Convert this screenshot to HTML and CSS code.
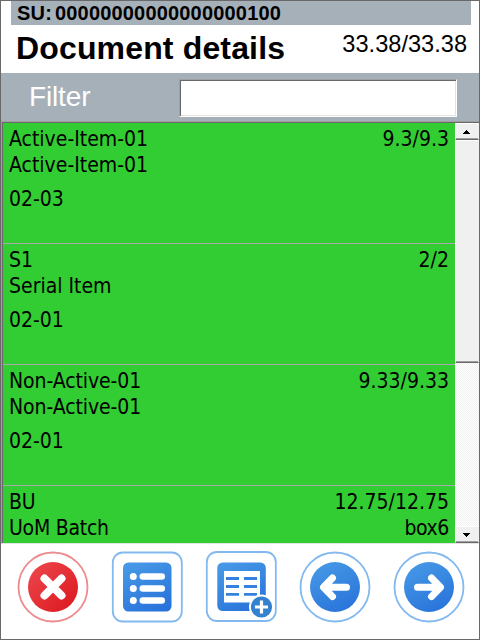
FILE: index.html
```
<!DOCTYPE html>
<html lang="en">
<head>
<meta charset="utf-8">
<title>Document details</title>
<link rel="stylesheet" href="styles.css">
</head>
<body>
<main class="screen">
  <div class="unit"><span class="unit-label">SU:</span><span class="unit-code">00000000000000000100</span></div>
  <header class="heading">
    <h1>Document details</h1>
    <span class="total">33.38/33.38</span>
  </header>
  <div class="filter">
    <label for="filter">Filter</label>
    <input id="filter" type="text">
  </div>
  <section class="list">
    <div class="rows">
      <article class="row">
        <div class="line"><span>Active-Item-01</span><span>9.3/9.3</span></div>
        <div class="line"><span>Active-Item-01</span></div>
        <div class="line place"><span>02-03</span></div>
      </article>
      <article class="row">
        <div class="line"><span>S1</span><span>2/2</span></div>
        <div class="line"><span>Serial Item</span></div>
        <div class="line place"><span>02-01</span></div>
      </article>
      <article class="row">
        <div class="line"><span class="name-non">Non-Active-01</span><span>9.33/9.33</span></div>
        <div class="line"><span class="name-non">Non-Active-01</span></div>
        <div class="line place"><span>02-01</span></div>
      </article>
      <article class="row">
        <div class="line"><span class="tight">BU</span><span>12.75/12.75</span></div>
        <div class="line"><span class="tight">UoM Batch</span><span class="unit-name">box6</span></div>
      </article>
    </div>
    <div class="scroll">
      <div class="step up"><svg width="8" height="4" viewBox="0 0 8 4" shape-rendering="crispEdges"><path d="M0 4h7v-1h-1v-1h-1v-1h-1v-1h-1v1h-1v1h-1v1h-1z"/></svg></div>
      <div class="thumb"></div>
      <div class="track"></div>
      <div class="step down"><svg width="8" height="4" viewBox="0 0 8 4" shape-rendering="crispEdges"><path d="M0 0h7v1h-1v1h-1v1h-1v1h-1v-1h-1v-1h-1v-1h-1z"/></svg></div>
    </div>
  </section>
  <nav class="actions">
    <svg width="72" height="72" viewBox="0 0 72 72">
      <defs>
        <linearGradient id="red" x1="0" y1="0" x2="1" y2="1"><stop offset="0.1" stop-color="#ec444a"/><stop offset="0.9" stop-color="#dc1b22"/></linearGradient>
        <linearGradient id="blue" x1="0.25" y1="0" x2="0.75" y2="1"><stop offset="0" stop-color="#4698e6"/><stop offset="1" stop-color="#2873da"/></linearGradient>
      </defs>
      <circle cx="36" cy="36" r="34.5" fill="none" stroke="#ee8b8f" stroke-width="1.8"/>
      <circle cx="36" cy="36" r="25" fill="url(#red)"/>
      <path d="M27.5 27.500l17 17M44.500 27.500l-17 17" stroke="#fff" stroke-width="8" stroke-linecap="round"/>
    </svg>
    <svg width="72" height="72" viewBox="0 0 72 72">
      <rect x="1.800" y="1.500" width="69" height="69" rx="10" fill="none" stroke="#83b9ef" stroke-width="1.8"/>
      <rect x="12" y="11.500" width="48.500" height="49" rx="5.500" fill="url(#blue)"/>
      <g fill="#fff"><circle cx="22.300" cy="25.500" r="3.500"/><circle cx="22.300" cy="37.500" r="3.500"/><circle cx="22.300" cy="49.500" r="3.500"/>
      <rect x="28.500" y="22.300" width="25.500" height="6.500" rx="3.200"/><rect x="28.500" y="34.300" width="25.500" height="6.500" rx="3.200"/><rect x="28.500" y="46.300" width="25.500" height="6.500" rx="3.200"/></g>
    </svg>
    <svg width="72" height="72" viewBox="0 0 72 72">
      <rect x="1.800" y="1" width="69" height="69" rx="10" fill="none" stroke="#83b9ef" stroke-width="1.8"/>
      <rect x="12.300" y="11.500" width="48.500" height="48.500" rx="5.500" fill="url(#blue)"/>
      <rect x="19" y="20" width="36" height="31.500" fill="#fff"/>
      <path d="M21 27.500h13M39 27.500h13M21 35.500h13M39 35.500h13M21 43.300h13M39 43.300h13" stroke="#3681df" stroke-width="2.800"/>
      <circle cx="56.500" cy="56" r="12.500" fill="#fff"/><circle cx="56.500" cy="56" r="10.600" fill="#3580cf"/>
      <path d="M50 56h13M56.500 49.500v13" stroke="#fff" stroke-width="3.200"/>
    </svg>
    <svg width="72" height="72" viewBox="0 0 72 72">
      <circle cx="36" cy="36" r="34.500" fill="none" stroke="#83b9ef" stroke-width="1.8"/>
      <circle cx="36" cy="36" r="25" fill="url(#blue)"/>
      <path d="M33.500 27L24.500 36.300l9 9.300M25 36.300h22.500" fill="none" stroke="#fff" stroke-width="7" stroke-linecap="round" stroke-linejoin="round"/>
    </svg>
    <svg width="72" height="72" viewBox="0 0 72 72">
      <circle cx="36" cy="36" r="34.500" fill="none" stroke="#83b9ef" stroke-width="1.8"/>
      <circle cx="36" cy="36" r="25" fill="url(#blue)"/>
      <path d="M38.500 27l9 9.300-9 9.300M47 36.300H24.500" fill="none" stroke="#fff" stroke-width="7" stroke-linecap="round" stroke-linejoin="round"/>
    </svg>
  </nav>
</main>
</body>
</html>
```
FILE: styles.css
```
* { box-sizing: border-box; }
body { margin: 0; font-family: "Liberation Sans", Arial, sans-serif; color: #000; }
.screen { display: flex; flex-direction: column; width: 480px; height: 640px; border: 1px solid #696969; background: #fff; overflow: hidden; }
.unit { display: flex; flex: none; height: 24px; margin: 0 8px 0 10px; padding-left: 6px; gap: 3px; background: #a6b0b9; font-weight: bold; font-size: 20px; line-height: 25px; white-space: nowrap; }
.unit-label, .unit-code { letter-spacing: 0.18px; }
.heading { display: flex; flex: none; justify-content: space-between; height: 48px; padding: 0 12px 0 15px; white-space: nowrap; }
h1 { margin: 0; font-size: 32px; line-height: 47px; letter-spacing: 0.15px; }
.total { font-size: 23.6px; line-height: 38px; }
.filter { display: flex; flex: none; height: 48px; padding: 6px 22px 4px 28px; justify-content: space-between; background: #a6b0b9; }
.filter label { color: #fff; font-size: 28px; line-height: 35px; letter-spacing: -0.15px; }
.filter input { width: 278px; height: 38px; padding: 2px 4px; border: 1px solid; border-color: #a0a0a0 #fff #fff #a0a0a0; box-shadow: inset 1px 1px #696969, inset -1px -1px #e3e3e3; outline: 0; background: #fff; font: 24px "Liberation Sans", sans-serif; border-radius: 0; }
.list { display: flex; flex: none; height: 423px; border-top: 1px solid #a0a0a0; border-left: 1px solid #a0a0a0; border-bottom: 1px solid #e3e3e3; }
.rows { width: 453px; flex: none; overflow: hidden; border-top: 1px solid #696969; border-left: 1px solid #696969; background: #32cd32; font-family: "DejaVu Sans Condensed", "DejaVu Sans", sans-serif; font-stretch: condensed; font-size: 21px; }
.row { height: 121px; padding: 3px 6px 0; border-bottom: 1px solid #a9a9a9; }
.line { display: flex; justify-content: space-between; height: 26px; line-height: 26px; white-space: nowrap; }
.place { margin-top: 8px; }
.name-non { letter-spacing: -0.08px; }
.tight { letter-spacing: -0.25px; }
.unit-name { letter-spacing: -0.4px; }
.scroll { display: flex; flex-direction: column; flex: 1; border-top: 1px solid #696969; background: #f0f0f0; }
.step { display: flex; justify-content: center; align-items: center; flex: none; height: 17px; border: 1px solid; border-color: #fff #f0f0f0 #696969 #fff; box-shadow: inset 0 -1px #a0a0a0; }
.thumb { flex: none; height: 223px; border: 1px solid; border-color: #fff #f0f0f0 #696969 #fff; box-shadow: inset 0 -1px #a0a0a0; }
.track { flex: 1; background: repeating-conic-gradient(#fff 0 25%, #f0f0f0 0 50%) 0 0 / 2px 2px; }
.actions { display: flex; flex: none; gap: 22px; padding: 7px 0 0 16px; }
.actions svg { flex: none; }
```
